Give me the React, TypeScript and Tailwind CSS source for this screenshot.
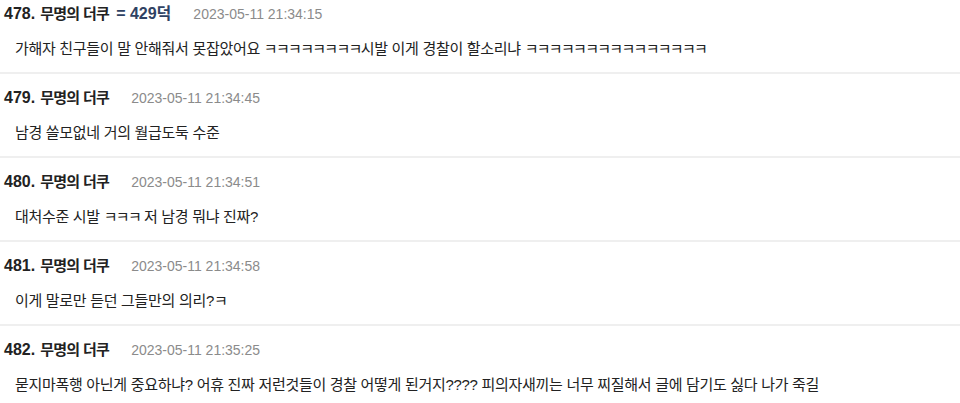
const comments = [
  {
    no: 478,
    name: "무명의 더쿠",
    extra: "= 429덕",
    date: "2023-05-11 21:34:15",
    body: "가해자 친구들이 말 안해줘서 못잡았어요 ㅋㅋㅋㅋㅋㅋㅋㅋ시발 이게 경찰이 할소리냐 ㅋㅋㅋㅋㅋㅋㅋㅋㅋㅋㅋㅋㅋㅋㅋ",
  },
  { no: 479, name: "무명의 더쿠", date: "2023-05-11 21:34:45", body: "남경 쓸모없네 거의 월급도둑 수준" },
  { no: 480, name: "무명의 더쿠", date: "2023-05-11 21:34:51", body: "대처수준 시발 ㅋㅋㅋ 저 남경 뭐냐 진짜?" },
  { no: 481, name: "무명의 더쿠", date: "2023-05-11 21:34:58", body: "이게 말로만 듣던 그들만의 의리?ㅋ" },
  {
    no: 482,
    name: "무명의 더쿠",
    date: "2023-05-11 21:35:25",
    body: "묻지마폭행 아닌게 중요하냐? 어휴 진짜 저런것들이 경찰 어떻게 된거지???? 피의자새끼는 너무 찌질해서 글에 담기도 싫다 나가 죽길",
  },
]

// ㅋ runs are set a bit tighter so they sit as narrow as in the original
function Body({ text }: { text: string }) {
  const parts = text.split(/(ㅋ+)/)
  return (
    <>
      {parts.map((p, i) =>
        p.startsWith("ㅋ") ? (
          <span key={i} className="tracking-[-1.7px]">
            {p}
          </span>
        ) : (
          <span key={i}>{p}</span>
        )
      )}
    </>
  )
}

export default function App() {
  return (
    <div className="h-[403px] w-full overflow-hidden bg-white font-['Liberation_Sans','Noto_Sans_CJK_KR',sans-serif]">
      <ul className="-mt-[12px]">
        {comments.map((c) => (
          <li key={c.no} className="border-t-2 border-[#efefef] pt-[14px] pb-[13px]">
            <div className="flex h-[20px] items-center pl-[4px] leading-[20px]">
              <span className="text-[16px] font-bold text-[#222]">{c.no}.</span>
              <span className="ml-[5px] text-[15px] font-bold tracking-[-0.7px] text-[#222]">{c.name}</span>
              {c.extra && (
                <span className="ml-[7px] text-[16px] font-bold text-[#2f4263]">{c.extra}</span>
              )}
              <span className="ml-[22px] text-[14px] text-[#8b8b8b]">{c.date}</span>
            </div>
            <p className="mt-[15px] h-[20px] whitespace-nowrap pl-[15px] text-[15px] leading-[20px] tracking-[-0.3px] text-[#222]">
              <Body text={c.body} />
            </p>
          </li>
        ))}
      </ul>
    </div>
  )
}
